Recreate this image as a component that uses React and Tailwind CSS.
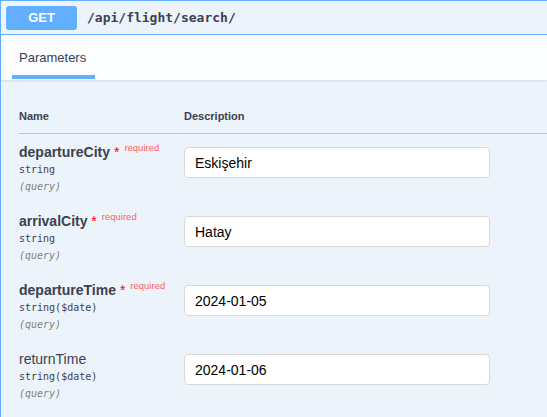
import React from 'react';

const sans = { fontFamily: '"Liberation Sans", Arial, sans-serif' };
const mono = { fontFamily: '"DejaVu Sans Mono", "Liberation Mono", monospace' };

const params = [
  { name: 'departureCity', type: 'string', required: true, value: 'Eskişehir' },
  { name: 'arrivalCity', type: 'string', required: true, value: 'Hatay' },
  { name: 'departureTime', type: 'string($date)', required: true, value: '2024-01-05' },
  { name: 'returnTime', type: 'string($date)', required: false, value: '2024-01-06' },
];

function ParamRow({ p }) {
  return (
    <div className="grid grid-cols-[165px_1fr] h-[69px]">
      <div className="pt-[8px]">
        <div className={`h-[20px] leading-[20px] text-[14px] text-[#3b4151] whitespace-nowrap ${p.required ? 'font-bold' : ''}`}>
          {p.name}
          {p.required && (
            <>
              <span className="text-[#ff0000] font-normal"> *</span>
              <span className="relative -top-[6px] pl-[5px] text-[9.5px] font-normal text-[#ff6161]">required</span>
            </>
          )}
        </div>
        <div className="h-[16px] leading-[16px] text-[10px] text-[#3b4151]" style={mono}>{p.type}</div>
        <div className="h-[16px] leading-[17px] text-[10px] italic text-[#808080]" style={mono}>(query)</div>
      </div>
      <div className="pt-[13px]">
        <input
          defaultValue={p.value}
          readOnly
          className="block w-[306px] h-[31px] bg-white border border-[#d9d9d9] rounded-[4px] pl-[10px] text-[14px] text-black outline-none"
          style={sans}
        />
      </div>
    </div>
  );
}

export default function App() {
  return (
    <div className="min-h-screen bg-white overflow-hidden" style={sans}>
      <div className="border-l border-t border-[#61affe] bg-[#ecf3fb] min-h-[417px]">
        {/* summary */}
        <div className="h-[34px] border-b border-[#61affe] flex items-center pl-[5px] gap-[10px]">
          <div className="w-[71px] h-[24px] rounded-[3px] bg-[#61affe] text-white font-bold text-[13px] flex items-center justify-center">
            GET
          </div>
          <span className="text-[13px] text-[#3b4151] font-semibold" style={mono}>/api/flight/search/</span>
        </div>

        {/* section header */}
        <div className="h-[45px] bg-[#fbfdff] shadow-[0_1px_2px_rgba(0,0,0,0.1)] pl-[11px] pt-[13px] relative">
          <div className="w-[83px] flex flex-col">
            <div className="h-[20px] leading-[20px] pl-[7px] text-[13px] font-medium text-[#3b4151]">Parameters</div>
            <div className="mt-[7px] h-[4px] bg-[#61affe]" />
          </div>
        </div>

        {/* table */}
        <div className="pt-[28px] pl-[18px]">
          <div className="grid grid-cols-[165px_1fr] h-[26px] border-b border-[#bcc3cd] pb-[9px] text-[11px] font-bold text-[#3b4151] leading-[16px]">
            <div>Name</div>
            <div>Description</div>
          </div>
          {params.map((p) => (
            <ParamRow key={p.name} p={p} />
          ))}
        </div>
      </div>
    </div>
  );
}
